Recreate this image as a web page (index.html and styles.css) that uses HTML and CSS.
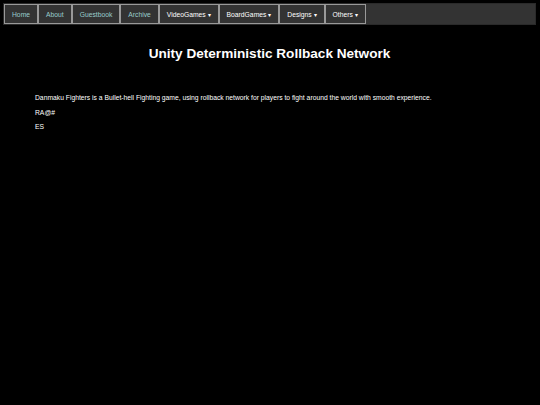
FILE: index.html
```html
<!DOCTYPE html>
<html>
<head>
<meta charset="utf-8">
<link rel="stylesheet" href="styles.css">
</head>
<body>
<nav class="navbar">
  <a class="nav-item link" href="#">Home</a>
  <a class="nav-item link" href="#">About</a>
  <a class="nav-item link" href="#">Guestbook</a>
  <a class="nav-item link" href="#">Archive</a>
  <span class="nav-item drop">VideoGames <span class="caret">&#9662;</span></span>
  <span class="nav-item drop">BoardGames <span class="caret">&#9662;</span></span>
  <span class="nav-item drop">Designs <span class="caret">&#9662;</span></span>
  <span class="nav-item drop">Others <span class="caret">&#9662;</span></span>
</nav>
<main class="content">
  <h1 class="title">Unity Deterministic Rollback Network</h1>
  <p class="text">Danmaku Fighters is a Bullet-hell Fighting game, using rollback network for players to fight around the world with smooth experience.</p>
  <p class="text">RA@#</p>
  <p class="text">ES</p>
</main>
</body>
</html>
```
FILE: styles.css
```css
html, body {
  margin: 0;
  padding: 0;
  background: #000;
  color: #fff;
  font-family: "Liberation Sans", Arial, sans-serif;
}
body {
  padding: 3px 4px 0 3px;
}
.navbar {
  display: flex;
  align-items: stretch;
  height: 22px;
  background: #333;
  border: 1px solid #2a2a2a;
  box-sizing: border-box;
  padding: 0;
}
.nav-item {
  display: flex;
  align-items: center;
  padding: 0 7px;
  border: 1px solid #999;
  font-size: 6.75px;
  text-decoration: none;
  white-space: pre;
}
.link {
  color: #9cc;
}
.drop {
  color: #fff;
}
.caret {
  font-size: 6px;
}
.content {
  padding: 0 32px;
}
.title {
  margin: 21px 0 33px;
  text-align: center;
  font-size: 13.6px;
  font-weight: bold;
}
.text {
  margin: 6.5px 0;
  font-size: 6.75px;
  line-height: 8px;
}
```
